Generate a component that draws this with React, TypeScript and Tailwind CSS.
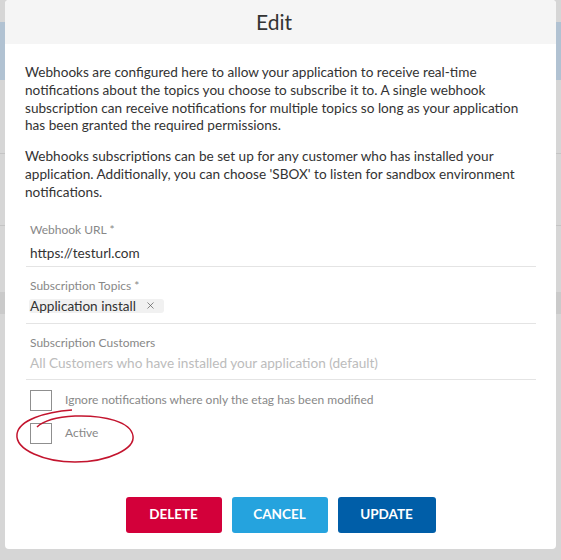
import { X } from 'lucide-react'

type FieldProps = { label: string; children: React.ReactNode; dim?: boolean; mt: string; pb: string }

function Field({ label, children, dim, mt, pb }: FieldProps) {
  return (
    <div className={'border-b border-[#e4e4e4] pl-[4px] ' + pb}>
      <div className="text-[12px] leading-[16px] text-[#888]">{label}</div>
      <div className={mt + ' text-[13.6px] leading-[20px] ' + (dim ? 'text-[#bcbcbc]' : 'text-[#333]')}>{children}</div>
    </div>
  )
}

function Check({ label }: { label: string }) {
  return (
    <label className="flex items-center h-[21px]">
      <span className="w-[22px] h-[21px] border border-[#8f8f8f] bg-white"></span>
      <span className="ml-[13px] text-[12px] text-[#888]">{label}</span>
    </label>
  )
}

export default function App() {
  return (
    <div className="relative w-[561px] h-[560px] bg-[#d6d6d6] overflow-hidden font-['Lato',sans-serif]">
      {/* page behind the dialog */}
      <div className="absolute inset-x-0 top-[22px] h-[58px] bg-[#b1c2d2]"></div>
      <div className="absolute inset-x-0 top-[153px] h-px bg-[#c4c4c4]"></div>
      <div className="absolute inset-x-0 top-[225px] h-px bg-[#c4c4c4]"></div>
      <div className="absolute inset-x-0 top-[292px] h-[22px] bg-[#cacaca]"></div>

      <div className="relative ml-[5px] w-[551px] h-[549px] bg-white rounded-[4px] overflow-hidden flex flex-col">
        <div className="h-[44px] shrink-0 bg-[#f5f5f5] flex items-center justify-center pr-[13px] text-[21px] text-[#333]">
          Edit
        </div>

        <div className="px-[20px] pt-[20px] text-[13.6px] leading-[17.8px] text-[#333] whitespace-nowrap">
          <p>
            Webhooks are configured here to allow your application to receive real-time
            <br />
            notifications about the topics you choose to subscribe it to. A single webhook
            <br />
            subscription can receive notifications for multiple topics so long as your application
            <br />
            has been granted the required permissions.
          </p>
          <p className="mt-[13px]">
            Webhooks subscriptions can be set up for any customer who has installed your
            <br />
            application. Additionally, you can choose 'SBOX' to listen for sandbox environment
            <br />
            notifications.
          </p>
        </div>

        <div className="pl-[21px] pr-[20px] mt-[20px] flex flex-col gap-[11px]">
          <Field label="Webhook URL *" mt="mt-[5px]" pb="pb-[3px]">
            https://testurl.com
          </Field>
          <Field label="Subscription Topics *" mt="mt-[2px]" pb="pb-[7px]">
            <span className="inline-flex items-center h-[14px] bg-[#f1f1f1] rounded-[3px] pl-[1px] pr-[8px] -ml-[1px]">
              Application install
              <X className="ml-[9px] w-[11px] h-[11px] text-[#555]" strokeWidth={1.5} />
            </span>
          </Field>
          <Field label="Subscription Customers" dim mt="mt-[2px]" pb="pb-[6px]">
            All Customers who have installed your application (default)
          </Field>
        </div>

        <div className="px-[25px] mt-[10px] flex flex-col gap-[12px]">
          <Check label="Ignore notifications where only the etag has been modified" />
          <Check label="Active" />
        </div>

        <div className="mt-[53px] flex justify-center gap-[10px]">
          <button className="w-[96px] h-[36px] rounded-[3px] bg-[#d3003a] text-white text-[13.5px] font-bold">
            DELETE
          </button>
          <button className="w-[96px] h-[36px] rounded-[3px] bg-[#25a3de] text-white text-[13.5px] font-bold">
            CANCEL
          </button>
          <button className="w-[98px] h-[36px] rounded-[3px] bg-[#005ea8] text-white text-[13.5px] font-bold">
            UPDATE
          </button>
        </div>

        <svg className="absolute left-0 top-[400px] pointer-events-none" width="140" height="70" viewBox="0 0 140 70">
          <path
            d="M67 10 C 40 12, 14 20, 12 34 C 10 50, 40 62, 70 62 C 105 62, 130 48, 128 36 C 126 22, 100 15, 70 16 C 52 17, 38 21, 32 27"
            fill="none"
            stroke="#c3142e"
            strokeWidth="1.5"
          />
        </svg>
      </div>
    </div>
  )
}
